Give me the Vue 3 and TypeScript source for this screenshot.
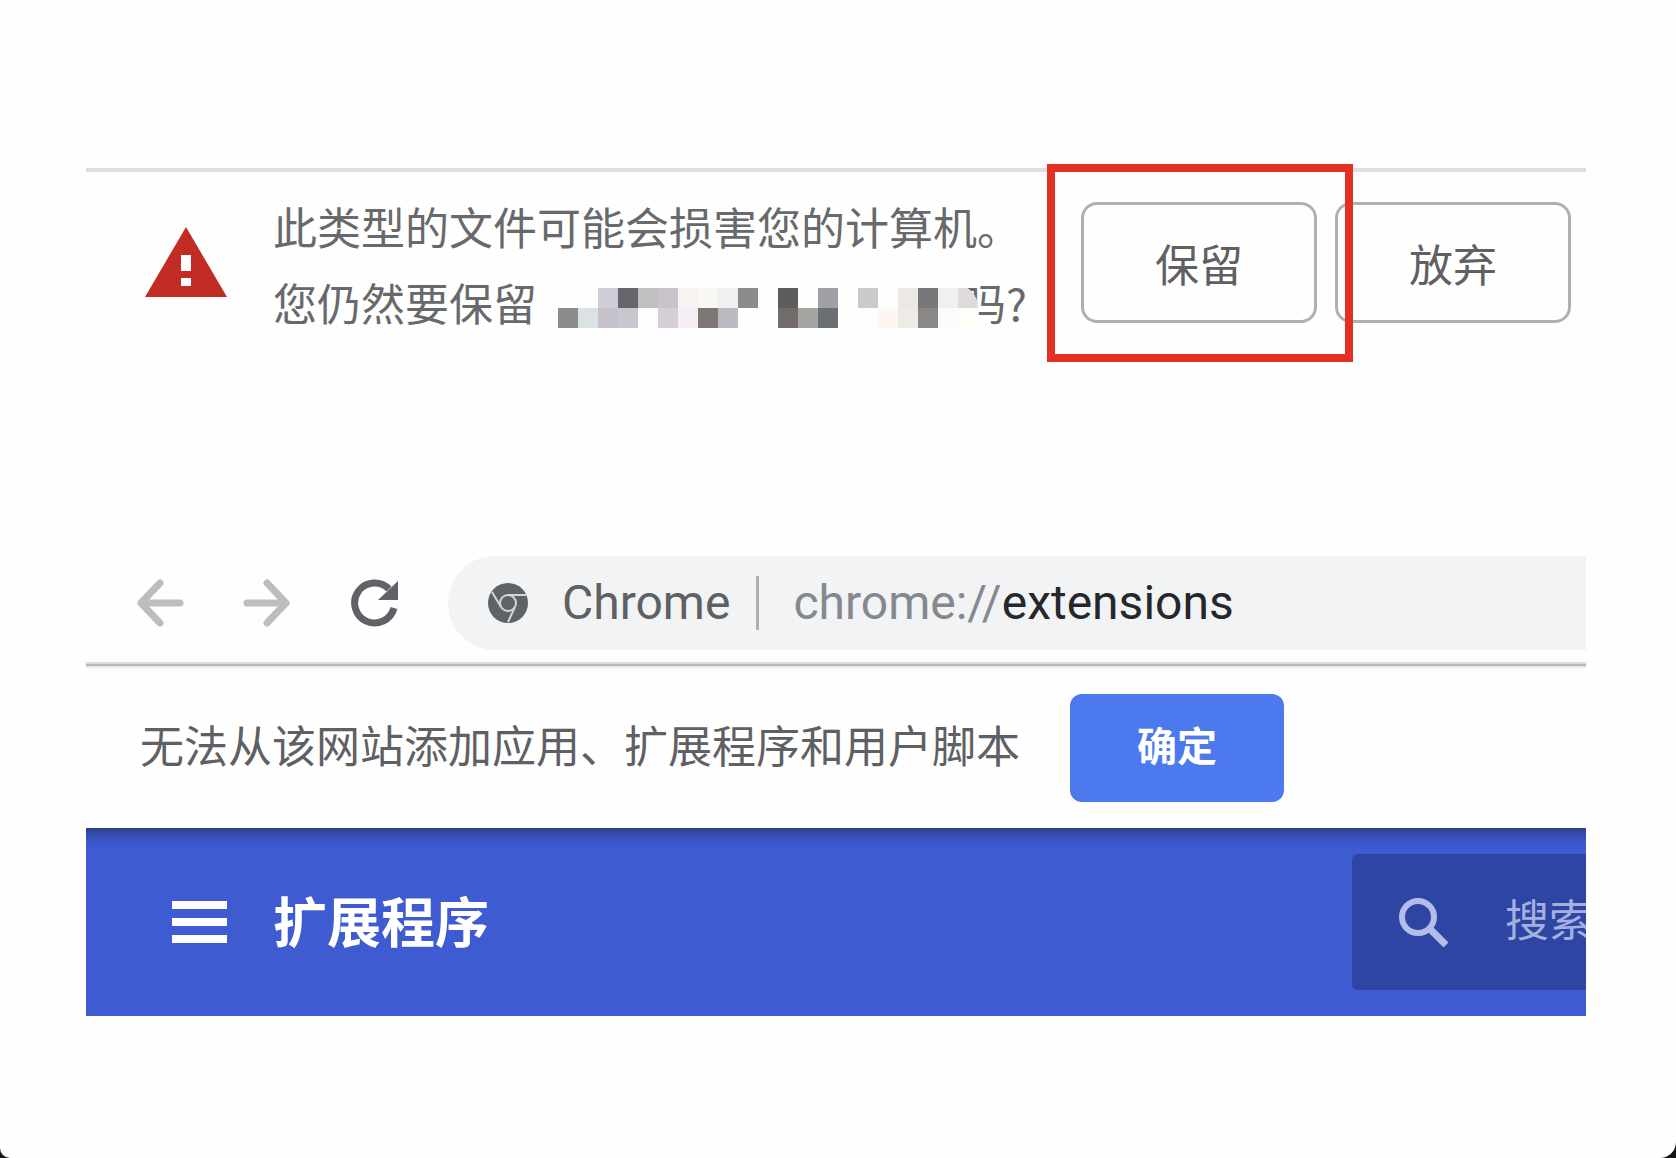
<script setup lang="ts">
import { ref } from 'vue'

const query = ref('')
const address = { scheme: 'chrome://', path: 'extensions' }

const cell = 20
const mosaic: string[][] = [
  ['', '', '#cfcdd8', '#66666d', '#c0c1c3', '#cac2c8', '#f7f3f3', '#f8f7f3', '#f0f0f3', '#8d8b8d', '', '#5d5d5b', '', '#a09fa6', '', '#cacacc', '#fdfdfc', '#ece8e3', '#777777', '#eff1f1', '#dfdbda'],
  ['#8e8b8e', '#dbe2e4', '#c6c0ca', '#c8c6ce', '#fdfdfe', '#d5ced6', '#f5eef4', '#7e7774', '#babac1', '#fefefb', '', '#716c69', '#a6a5a2', '#6b7074', '', '', '#fef6f2', '#eeeae6', '#8b8786', '#f9fbff', '#fdfef6'],
]
</script>

<template>
  <main class="page">
    <section class="download">
      <svg class="warning" viewBox="0 0 82 70" aria-hidden="true">
        <path d="M41 0 82 70H0Z" fill="#c12d25" />
        <path d="M36 28h10v16H36zM36 51h10v8H36z" fill="#fff" />
      </svg>
      <div class="message">
        <p>此类型的文件可能会损害您的计算机。</p>
        <p class="line">
          <span>您仍然要保留</span>
          <svg class="mosaic" viewBox="0 0 420 44" aria-hidden="true">
            <rect width="420" height="44" fill="#fefefe" />
            <template v-for="(row, r) in mosaic" :key="r">
              <template v-for="(color, c) in row" :key="c">
                <rect v-if="color" :x="c * cell" :y="4 + r * cell" :width="cell" :height="cell" :fill="color" shape-rendering="crispEdges" />
              </template>
            </template>
          </svg>
          <span>吗?</span>
        </p>
      </div>
      <div class="actions">
        <div class="keep">
          <button type="button" class="outlined">保留</button>
          <span class="highlight"></span>
        </div>
        <button type="button" class="outlined">放弃</button>
      </div>
    </section>

    <section class="browser">
      <nav class="toolbar">
        <button type="button" class="nav" aria-label="后退">
          <svg viewBox="0 0 48 48"><path d="M24 4 5 24 24 44M5 24H44" fill="none" stroke="#bcbdbe" stroke-width="7" stroke-linecap="round" stroke-linejoin="round" /></svg>
        </button>
        <button type="button" class="nav" aria-label="前进">
          <svg viewBox="0 0 48 48"><path d="M24 4 43 24 24 44M43 24H4" fill="none" stroke="#bcbdbe" stroke-width="7" stroke-linecap="round" stroke-linejoin="round" /></svg>
        </button>
        <button type="button" class="nav" aria-label="重新加载">
          <svg viewBox="0 0 48 48">
            <path d="M44 29A20 20 0 1 1 39 10" fill="none" stroke="#5f6368" stroke-width="7" />
            <path d="M48 2V21H28Z" fill="#5f6368" />
          </svg>
        </button>
        <div class="omnibox">
          <svg class="chrome" viewBox="0 0 40 40" aria-hidden="true">
            <circle cx="20" cy="20" r="20" fill="#5f6368" />
            <circle cx="20" cy="20" r="8" fill="none" stroke="#d2d5d8" stroke-width="2" />
            <path d="M20 12H38M13 24 4 9M27 24 20 39" stroke="#d2d5d8" stroke-width="2" />
          </svg>
          <span class="origin">Chrome</span>
          <span class="divider"></span>
          <span class="url">{{ address.scheme }}<b>{{ address.path }}</b></span>
        </div>
      </nav>

      <div class="notice">
        <p>无法从该网站添加应用、扩展程序和用户脚本</p>
        <button type="button" class="confirm">确定</button>
      </div>

      <header class="header">
        <button type="button" class="menu" aria-label="菜单">
          <span></span><span></span><span></span>
        </button>
        <h1>扩展程序</h1>
        <label class="search">
          <svg viewBox="0 0 50 50" aria-hidden="true">
            <circle cx="19" cy="20" r="16" fill="none" stroke="#b3bdea" stroke-width="6" />
            <path d="M30 31 47 48" stroke="#b3bdea" stroke-width="7" />
          </svg>
          <input v-model="query" type="text" placeholder="搜索" aria-label="搜索" />
        </label>
      </header>
    </section>
  </main>
</template>

<style>
html,
body {
  background: #161616;
}
</style>

<style scoped>
.page {
  box-sizing: border-box;
  min-height: 100vh;
  padding: 168px 90px 0 86px;
  overflow: hidden;
  background: #fefefe;
  border-radius: 0 0 16px 10px;
  color: #5f6063;
  font-family: "Noto Sans CJK SC", sans-serif;
  font-size: 44px;
  line-height: 76px;
}

p,
h1 {
  margin: 0;
}

button {
  padding: 0;
  border: 0;
  background: none;
  color: inherit;
  font: inherit;
}

svg {
  display: block;
  flex: none;
}

.download {
  display: flex;
  align-items: flex-start;
  border-top: 4px solid #dfdfdf;
}

.warning {
  width: 82px;
  height: 70px;
  margin: 55px 46px 0 59px;
}

.message {
  flex: none;
  padding-top: 16px;
  color: #68696b;
  white-space: nowrap;
}

.line {
  display: flex;
  align-items: center;
}

.mosaic {
  position: relative;
  width: 420px;
  height: 44px;
  margin: 8px -16px 0 21px;
  border-radius: 0 24px 4px 0;
}

.actions {
  display: flex;
  flex: none;
  gap: 18px;
  margin: 30px 15px 0 auto;
}

.keep {
  position: relative;
}

.outlined {
  box-sizing: border-box;
  display: block;
  width: 236px;
  height: 121px;
  border: 3px solid #b0b0b1;
  border-radius: 16px;
}

.highlight {
  position: absolute;
  inset: -38px -36px -39px -34px;
  z-index: 1;
  border: 8px solid #e33022;
  pointer-events: none;
}

.browser {
  margin-top: 216px;
}

.toolbar {
  display: flex;
  align-items: center;
  padding: 0 0 14px 50px;
  border-bottom: 2px solid #b8b8b8;
  box-shadow: inset 0 -2px #dcdcdc, 0 2px #ececec;
  font-family: Roboto, sans-serif;
}

.nav {
  width: 48px;
  height: 48px;
  margin-right: 59px;
}

.nav:nth-child(3) {
  margin-right: 50px;
}

.omnibox {
  display: flex;
  flex: 1;
  align-items: center;
  height: 94px;
  padding-left: 40px;
  border-radius: 47px 0 0 47px;
  background: #f1f3f4;
  font-size: 48px;
}

.chrome {
  width: 40px;
  height: 40px;
  margin-right: 34px;
}

.divider {
  width: 3px;
  height: 54px;
  margin: 0 34px 0 26px;
  background: #adafb1;
}

.url {
  color: #85898d;
}

.url b {
  color: #25272a;
  font-weight: 400;
}

.notice {
  display: flex;
  align-items: center;
  gap: 50px;
  padding: 28px 0 26px 54px;
  white-space: nowrap;
}

.notice p {
  padding-bottom: 8px;
}

.confirm {
  width: 214px;
  height: 108px;
  padding-bottom: 8px;
  border-radius: 12px;
  background: #4c79ee;
  color: #fff;
  font-size: 40px;
  font-weight: 700;
}

.header {
  display: flex;
  align-items: center;
  height: 188px;
  background: linear-gradient(#2e4184, #344cb0 6px, #3e5bd1 18px);
}

.menu {
  display: flex;
  flex-direction: column;
  gap: 9px;
  width: 55px;
  margin: 0 46px 0 86px;
}

.menu span {
  height: 8px;
  background: #fff;
}

h1 {
  padding-bottom: 4px;
  color: #fff;
  font-size: 54px;
  font-weight: 700;
}

.search {
  display: flex;
  align-items: center;
  width: 234px;
  height: 136px;
  margin-left: auto;
  border-radius: 6px 0 0 6px;
  background: #2e45a3;
  overflow: hidden;
}

.search svg {
  width: 50px;
  height: 50px;
  margin: 0 56px 0 47px;
}

.search input {
  flex: none;
  width: 160px;
  padding: 0 0 8px;
  border: 0;
  outline: 0;
  background: none;
  color: #a5b0e0;
  font: inherit;
}

.search input::placeholder {
  color: #a5b0e0;
  opacity: 1;
}
</style>
